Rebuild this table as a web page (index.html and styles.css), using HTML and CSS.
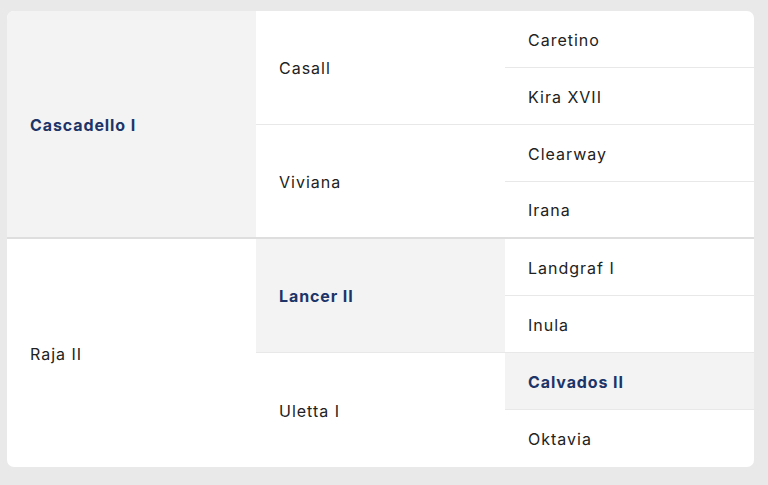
FILE: index.html
```html
<!DOCTYPE html>
<html>
<head>
<meta charset="utf-8">
<link rel="stylesheet" href="styles.css">
</head>
<body>
<div class="card">
  <div class="cell c1 span4 hl bold sep">Cascadello I</div>
  <div class="cell c2 span2">Casall</div>
  <div class="cell c3">Caretino</div>
  <div class="cell c3">Kira XVII</div>
  <div class="cell c2 span2 sep">Viviana</div>
  <div class="cell c3">Clearway</div>
  <div class="cell c3 sep">Irana</div>

  <div class="cell c1 span4 last">Raja II</div>
  <div class="cell c2 span2 hl bold">Lancer II</div>
  <div class="cell c3">Landgraf I</div>
  <div class="cell c3">Inula</div>
  <div class="cell c2 span2 last">Uletta I</div>
  <div class="cell c3 hl bold">Calvados II</div>
  <div class="cell c3 last">Oktavia</div>
</div>
</body>
</html>
```
FILE: styles.css
```css
html, body {
  margin: 0;
  padding: 0;
  background: #e9e9e9;
}
body {
  padding: 11px 14px 18px 7px;
  font-family: "Inter", "Open Sans", sans-serif;
}
.card {
  width: 747px;
  height: 456px;
  background: #fff;
  border-radius: 7px;
  overflow: hidden;
  display: grid;
  grid-template-columns: 249px 249px 249px;
  grid-template-rows: repeat(8, 57px);
  grid-auto-flow: column dense;
}
.cell {
  display: flex;
  align-items: center;
  padding-left: 23px;
  padding-top: 1px;
  font-size: 16px;
  letter-spacing: 1px;
  color: #222;
  border-bottom: 1px solid #e8e8e8;
  box-sizing: border-box;
}
.c1 { grid-column: 1; }
.c2 { grid-column: 2; }
.c3 { grid-column: 3; }
.span4 { grid-row: span 4; }
.span2 { grid-row: span 2; }
.sep { border-bottom: 2px solid #dedede; }
.last { border-bottom: none; }
.hl { background: #f3f3f3; }
.bold { font-weight: 700; color: #1c3467; letter-spacing: 0.9px; }
```
